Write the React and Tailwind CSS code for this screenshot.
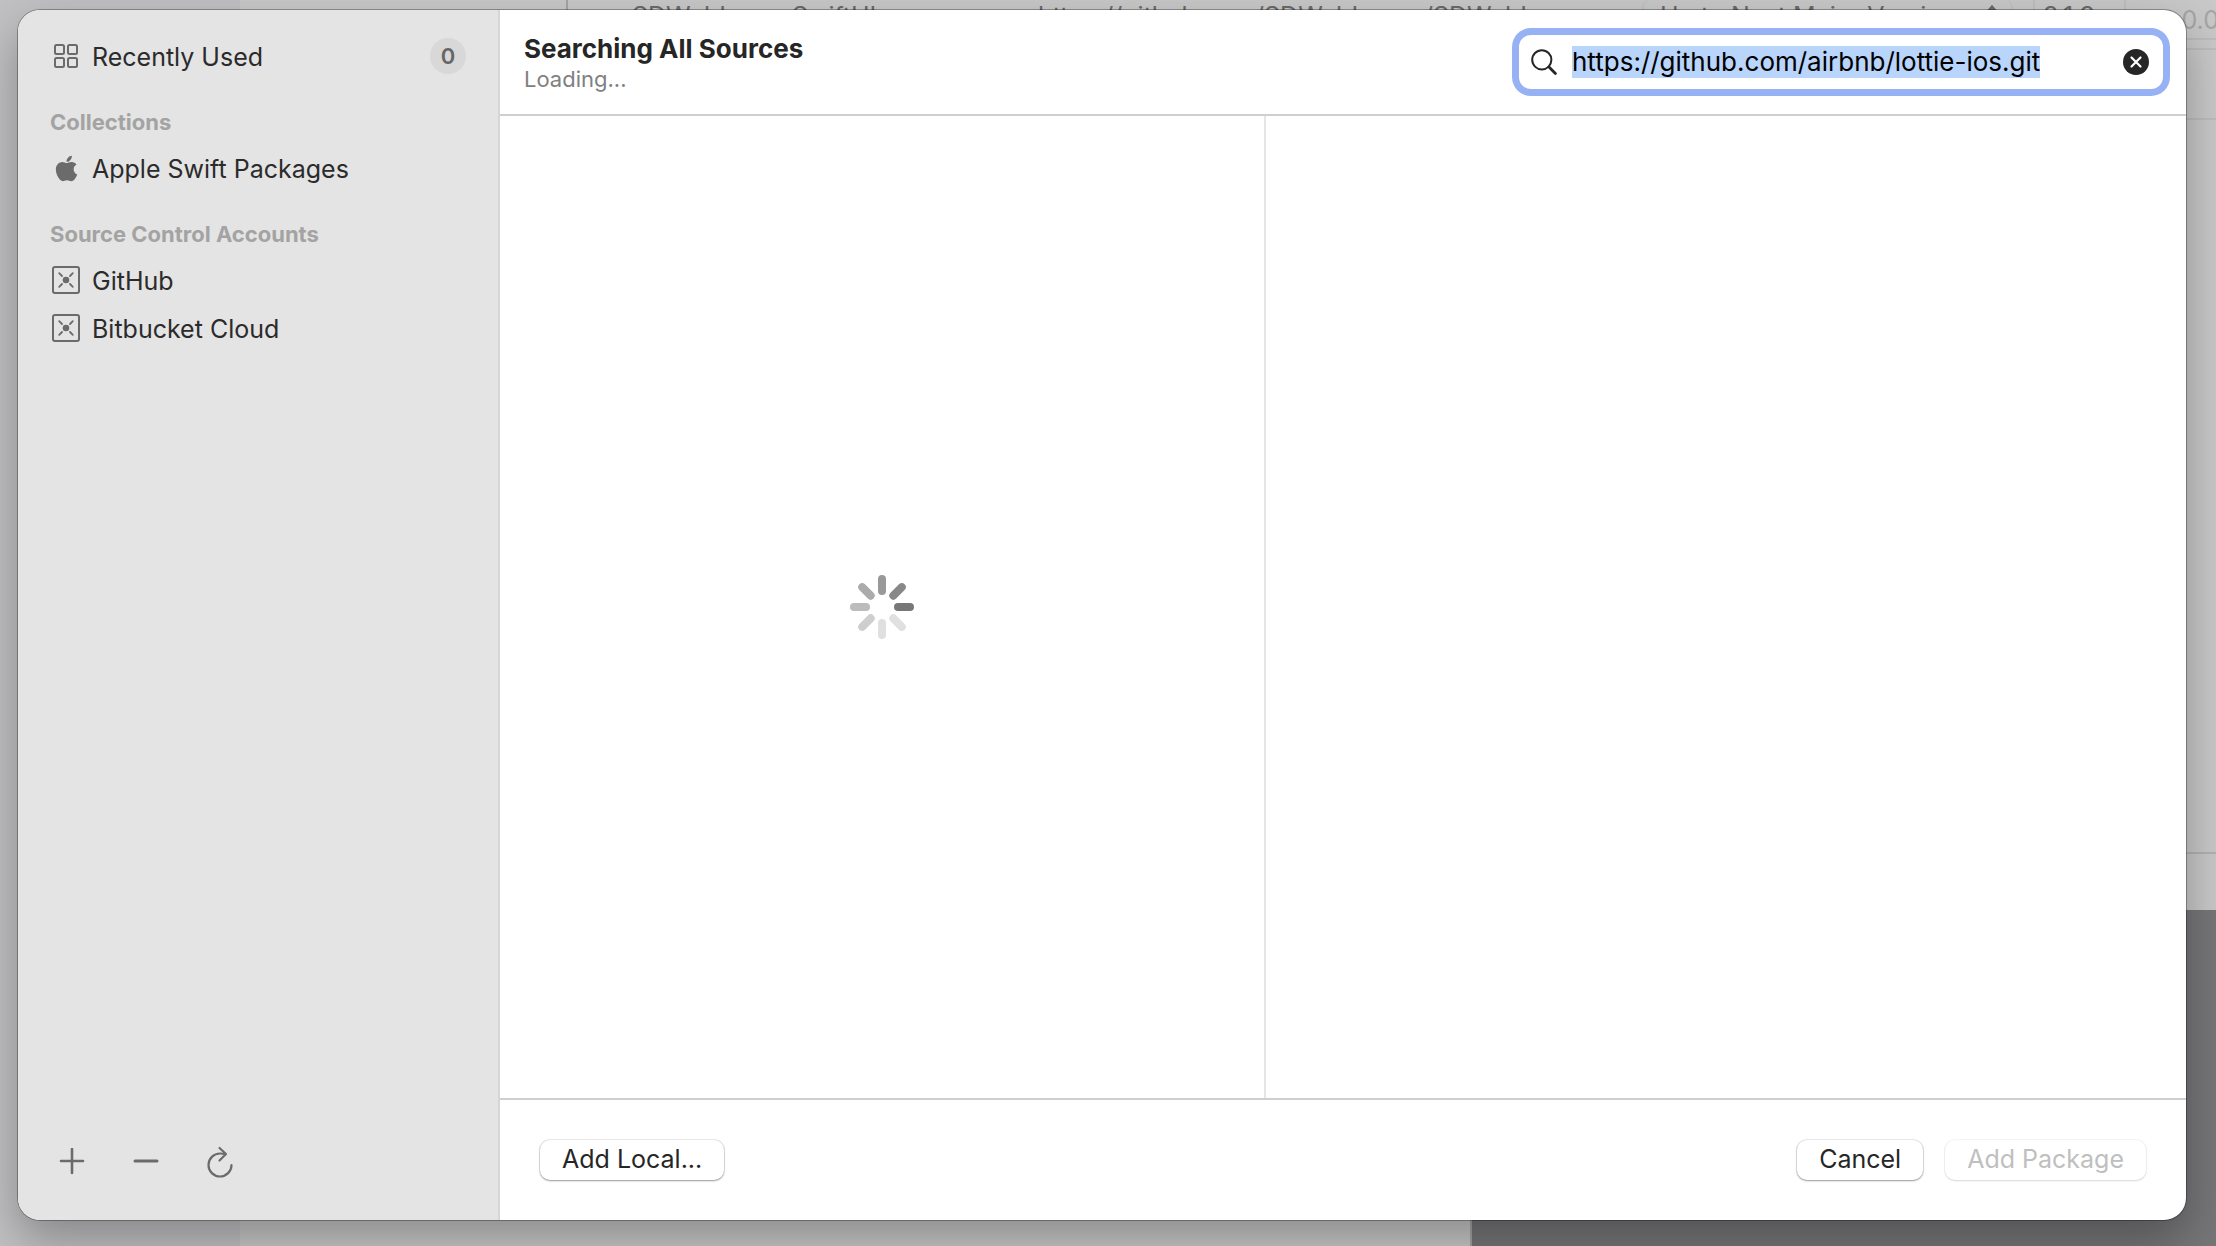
import React, { useState } from "react";
import { FaApple } from "react-icons/fa";

const iconGray = "text-[#6b6b6b]";

function GridIcon() {
  return (
    <svg width="24" height="24" viewBox="0 0 24 24" fill="none" stroke="currentColor" strokeWidth="2" aria-hidden="true">
      <rect x="1" y="1" width="9" height="9" rx="1.5" />
      <rect x="14" y="1" width="9" height="9" rx="1.5" />
      <rect x="1" y="14" width="9" height="9" rx="1.5" />
      <rect x="14" y="14" width="9" height="9" rx="1.5" />
    </svg>
  );
}

function AccountIcon() {
  return (
    <svg width="28" height="28" viewBox="0 0 28 28" fill="none" stroke="currentColor" strokeWidth="2" aria-hidden="true">
      <rect x="1" y="1" width="26" height="26" rx="2" />
      <circle cx="14" cy="14" r="3.3" fill="currentColor" stroke="none" />
      <path d="M7.2 7.2l2.8 2.8M20.8 7.2L18 10M7.2 20.8L10 18M20.8 20.8L18 18" strokeLinecap="round" strokeWidth="1.8" />
    </svg>
  );
}

function SidebarItem({ icon, label, badge }) {
  return (
    <li>
      <button type="button" className="flex h-12 w-full items-center gap-[10px] text-left text-[25px] leading-8 text-[#2b2b2b]">
        <span className={"flex w-8 justify-center " + iconGray}>{icon}</span>
        <span className="grow pt-0.5">{label}</span>
        {badge !== undefined && (
          <span className="flex size-9 items-center justify-center rounded-full bg-[#d8d8d8] text-[22px] font-semibold text-[#666]">{badge}</span>
        )}
      </button>
    </li>
  );
}

function SidebarHeading({ children }) {
  return <h2 className="mt-4 flex h-12 items-center pt-1 text-[22px] font-bold text-[#a3a3a3]">{children}</h2>;
}

function Sidebar() {
  return (
    <aside className="flex w-[482px] shrink-0 flex-col border-r-2 border-[#d6d6d6] bg-[#e4e4e4] pr-8 pl-8">
      <ul className="mt-[22px]">
        <SidebarItem icon={<GridIcon />} label="Recently Used" badge="0" />
      </ul>
      <SidebarHeading>Collections</SidebarHeading>
      <ul>
        <SidebarItem icon={<FaApple size={29} />} label="Apple Swift Packages" />
      </ul>
      <SidebarHeading>Source Control Accounts</SidebarHeading>
      <ul>
        <SidebarItem icon={<AccountIcon />} label="GitHub" />
        <SidebarItem icon={<AccountIcon />} label="Bitbucket Cloud" />
      </ul>
      <div className={"mt-auto mb-10 flex items-center gap-[38px] pl-1 " + iconGray}>
        <button type="button" aria-label="Add" className="flex size-9 items-center justify-center">
          <svg width="26" height="28" viewBox="0 0 26 28" fill="none" stroke="currentColor" strokeWidth="2.6" strokeLinecap="round">
            <path d="M2 13h22M13 1v24" />
          </svg>
        </button>
        <button type="button" aria-label="Remove" className="flex size-9 items-center justify-center">
          <svg width="26" height="28" viewBox="0 0 26 28" fill="none" stroke="currentColor" strokeWidth="3" strokeLinecap="round">
            <path d="M2 13h22" />
          </svg>
        </button>
        <button type="button" aria-label="Reload" className="flex size-9 items-center justify-center">
          <svg width="26" height="32" viewBox="0 0 26 32" fill="none" stroke="currentColor" strokeWidth="2.2" strokeLinecap="round" strokeLinejoin="round">
            <path d="M24.5 19A11.5 11.5 0 1 1 13 7.5q2.6 0 5.4 .5M12.5 2l6.5 6-6.5 6.5" />
          </svg>
        </button>
      </div>
    </aside>
  );
}

function SearchField() {
  const [query, setQuery] = useState("https://github.com/airbnb/lottie-ios.git");
  return (
    <label className="flex h-[54px] w-[644px] items-center gap-[15px] rounded-xl bg-white pr-[14px] pl-3 ring-[7px] ring-[#97b1f5]">
      <svg width="26" height="26" viewBox="0 0 26 26" fill="none" stroke="#262626" strokeLinecap="round" aria-hidden="true">
        <circle cx="10.8" cy="10.8" r="9.6" strokeWidth="2" />
        <path d="M18 18l6.4 6.4" strokeWidth="2.8" />
      </svg>
      <input
        aria-label="Search packages"
        value={query}
        onChange={(e) => setQuery(e.target.value)}
        ref={(el) => el && el.select()}
        className="min-w-0 grow bg-transparent text-[26px] leading-8 text-black outline-none selection:bg-[#b9d5fb] selection:text-black"
      />
      <button type="button" aria-label="Clear search" onClick={() => setQuery("")}>
        <svg width="26" height="26" viewBox="0 0 26 26">
          <circle cx="13" cy="13" r="13" fill="#262626" />
          <path d="M8.5 8.5l9 9M17.5 8.5l-9 9" stroke="#fff" strokeWidth="2.2" strokeLinecap="round" />
        </svg>
      </button>
    </label>
  );
}

const spokes = ["#999", "#888", "#777", "#e0e0e0", "#e0e0e0", "#cecece", "#bcbcbc", "#ababab"];

function Spinner() {
  return (
    <svg width="64" height="64" viewBox="-32 -32 64 64" role="img" aria-label="Loading">
      {spokes.map((color, i) => (
        <rect key={i} x="-4" y="-32" width="8" height="20" rx="4" fill={color} transform={`rotate(${i * 45})`} />
      ))}
    </svg>
  );
}

function PushButton({ children, disabled }) {
  return (
    <button
      type="button"
      disabled={disabled}
      className="h-10 rounded-[10px] bg-white px-[22px] pb-0.5 text-[25px] leading-8 text-[#262626] shadow-[0_0_0_1px_rgba(0,0,0,0.08),0_1px_2px_rgba(0,0,0,0.35)] disabled:text-[#bfbfbf] disabled:shadow-[0_0_0_1px_rgba(0,0,0,0.04),0_1px_2px_rgba(0,0,0,0.12)]"
    >
      {children}
    </button>
  );
}

function Backdrop() {
  return (
    <div className="absolute inset-0 flex bg-[#c8c8c8] text-[25px] leading-8 text-[#6a6a6a]" aria-hidden="true">
      <div className="w-60 shrink-0 bg-[#c1c1c4]" />
      <div className="flex min-w-0 grow flex-col">
        <div className="flex h-[910px] flex-col">
          <div className="flex h-10 shrink-0 border-b-2 border-[#bcbcbc] whitespace-nowrap">
            <div className="w-[328px] shrink-0 border-r-2 border-[#a4a4a4]" />
            <div className="w-[406px] shrink-0 pl-16">SDWebImageSwiftUI</div>
            <div className="w-[668px] shrink-0 pl-16">https://github.com/SDWebImage/SDWebImage…</div>
            <div className="flex w-[371px] shrink-0 items-start justify-between rounded-lg border-x-2 border-[#c0c0c0] pr-3 pl-4">
              <span>Up to Next Major Version</span>
              <svg width="14" height="24" viewBox="0 0 14 24" fill="none" stroke="currentColor" strokeWidth="3" className="mt-1">
                <path d="M2 9l5-6 5 6M2 15l5 6 5-6" />
              </svg>
            </div>
            <div className="ml-5 w-[93px] shrink-0 border-x-2 border-[#bebebe] pl-2">3.1.3</div>
            <div className="grow pt-1 pl-[34px] text-[#a5a5a5]">3.0.0</div>
          </div>
          <div className="h-[10px] shrink-0 border-b-2 border-[#bcbcbc]" />
          <div className="h-[70px] shrink-0 border-b-2 border-[#bcbcbc]" />
          <div className="h-[734px] shrink-0 border-b-2 border-[#b2b2b2]" />
        </div>
        <div className="flex grow">
          <div className="w-[1232px] shrink-0 border-r-2 border-[#a4a4a4]" />
          <div className="grow bg-[#767678]" />
        </div>
      </div>
    </div>
  );
}

export default function App() {
  return (
    <div className="relative flex h-screen flex-col overflow-hidden font-['Inter',sans-serif]">
      <Backdrop />
      <main
        role="dialog"
        aria-label="Add package"
        className="relative mt-[10px] mr-[30px] mb-[26px] ml-[18px] flex grow overflow-hidden rounded-[22px] bg-white shadow-[0_0_0_1px_rgba(0,0,0,0.3),0_20px_46px_rgba(0,0,0,0.3)]"
      >
        <Sidebar />
        <div className="flex min-w-0 grow flex-col">
          <header className="flex h-[106px] shrink-0 items-center justify-between border-b-2 border-[#cfcfcf] pr-[23px] pl-6">
            <div className="pt-0.5">
              <h1 className="text-[26px] leading-8 font-bold text-[#262626]">Searching All Sources</h1>
              <p className="text-[22px] leading-7 text-[#808080]">Loading...</p>
            </div>
            <SearchField />
          </header>
          <div className="flex grow">
            <section className="flex w-[766px] shrink-0 items-center justify-center border-r-2 border-[#e5e5e5]">
              <Spinner />
            </section>
            <section className="grow" />
          </div>
          <footer className="flex h-[122px] shrink-0 items-center gap-[22px] border-t-2 border-[#cfcfcf] px-10">
            <PushButton>Add Local...</PushButton>
            <div className="grow" />
            <PushButton>Cancel</PushButton>
            <PushButton disabled>Add Package</PushButton>
          </footer>
        </div>
      </main>
    </div>
  );
}
